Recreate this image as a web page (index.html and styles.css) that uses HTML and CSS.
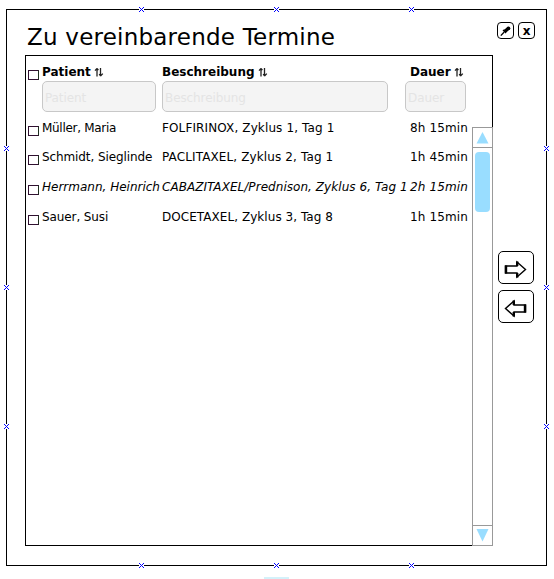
FILE: index.html
```html
<!DOCTYPE html>
<html lang="de">
<head>
<meta charset="utf-8">
<title>Zu vereinbarende Termine</title>
<link rel="stylesheet" href="styles.css">
</head>
<body>
<svg width="0" height="0" class="defs">
  <symbol id="handle" viewBox="0 0 5 5"><rect width="5" height="5" fill="#fff"/><path fill="#00f" d="M0 0h1v1H0zM4 0h1v1H4zM1 1h1v1H1zM3 1h1v1H3zM2 2h1v1H2zM1 3h1v1H1zM3 3h1v1H3zM0 4h1v1H0zM4 4h1v1H4z"/></symbol>
  <symbol id="sort" viewBox="0 0 10 10"><path fill="none" stroke="#222" stroke-width="1.3" d="M3 9.5V1.5M1 3.6L3 1.4M6.5 1v8M6.5 9l2.3-2.4M3 1.4l1.4 1.8M6.5 9L5.2 7"/></symbol>
</svg>
<main class="window">
  <section class="content">
    <h1>Zu vereinbarende Termine</h1>
    <div class="panel">
      <div class="table">
        <div class="row head"><i class="check"></i><b>Patient <svg class="sort"><use href="#sort"/></svg></b><b>Beschreibung <svg class="sort"><use href="#sort"/></svg></b><b>Dauer <svg class="sort"><use href="#sort"/></svg></b></div>
        <div class="filters"><input class="f-name" placeholder="Patient"><input class="f-desc" placeholder="Beschreibung"><input class="f-time" placeholder="Dauer"></div>
        <div class="row first"><i class="check"></i><span class="tight">Müller, Maria</span><span class="wide">FOLFIRINOX, Zyklus 1, Tag 1</span><span class="wide">8h 15min</span></div>
        <div class="row"><i class="check"></i><span class="snug">Schmidt, Sieglinde</span><span class="wide">PACLITAXEL, Zyklus 2, Tag 1</span><span class="wide">1h 45min</span></div>
        <div class="row italic"><i class="check"></i><span>Herrmann, Heinrich</span><span class="loose">CABAZITAXEL/Prednison, Zyklus 6, Tag 1</span><span class="wide">2h 15min</span></div>
        <div class="row"><i class="check"></i><span class="snug">Sauer, Susi</span><span class="loose">DOCETAXEL, Zyklus 3, Tag 8</span><span class="wide">1h 15min</span></div>
      </div>
      <div class="scroll">
        <div class="cap up"><svg width="19" height="19"><path d="M9.5 4L15.5 15.5h-12z"/></svg></div>
        <div class="track"><div class="thumb"></div></div>
        <div class="cap down"><svg width="19" height="19"><path d="M3.5 3h12l-6 12.5z"/></svg></div>
      </div>
    </div>
  </section>
  <aside class="side">
    <div class="tools">
      <button class="small"><svg width="15" height="15"><path d="M2.8 12.6L6 9.2M5 7l3 3M6 7.5L10 4.6l1.2 1.3L8 9z" fill="#000" stroke="#000" stroke-width="1.3"/><circle cx="10.4" cy="5.3" r="1.9"/></svg></button>
      <button class="small close">x</button>
    </div>
    <button class="move"><svg width="34" height="31"><path d="M6.5 14H18V10l8.5 7.5L18 25v-4H6.5z"/><path class="edge" d="M7 13.5v8M18.2 9.5V14M18.2 21v4.5"/></svg></button>
    <button class="move"><svg width="34" height="31"><path d="M26.5 14H15V10l-8.5 7.5L15 25v-4h11.5z"/><path class="edge" d="M26 13.5v8M14.8 9.5V14M14.8 21v4.5"/></svg></button>
  </aside>
  <svg class="h l t1"><use href="#handle"/></svg><svg class="h c t1"><use href="#handle"/></svg><svg class="h r t1"><use href="#handle"/></svg>
  <svg class="h x0 y1"><use href="#handle"/></svg><svg class="h x0 y2"><use href="#handle"/></svg><svg class="h x0 y3"><use href="#handle"/></svg>
  <svg class="h x1 y1"><use href="#handle"/></svg><svg class="h x1 y2"><use href="#handle"/></svg><svg class="h x1 y3"><use href="#handle"/></svg>
  <svg class="h l b1"><use href="#handle"/></svg><svg class="h c b1"><use href="#handle"/></svg><svg class="h r b1"><use href="#handle"/></svg>
</main>
<div class="stub"></div>
</body>
</html>
```
FILE: styles.css
```css
* { box-sizing: border-box; }
body { margin: 0; padding: 9px 0 0 6px; height: 579px; overflow: hidden; background: #fff; font: 12px/14px "DejaVu Sans", sans-serif; color: #000; }
.defs { position: absolute; }
.window { position: relative; width: 541px; height: 557px; border: 1px solid #000; display: flex; padding: 0 0 0 18px; }
h1 { margin: 0; padding: 12px 0 0 2px; height: 45px; font-size: 23px; line-height: 30px; font-weight: normal; letter-spacing: .22px; white-space: nowrap; }
.content { width: 468px; }
.panel { display: flex; width: 468px; height: 491px; border: 1px solid #000; }
.table { width: 446px; padding: 9px 0 0 2px; }
.row { display: grid; grid-template-columns: 14px 120px 248px 62px; height: 30px; white-space: nowrap; }
.head { height: 16px; }
.first { height: 29px; }
.italic { font-style: italic; }
.tight { letter-spacing: -.3px; }
.snug { letter-spacing: -.1px; }
.loose { letter-spacing: .05px; }
.wide { letter-spacing: .12px; }
.check { width: 11px; height: 10px; margin-top: 5px; border: 1px solid #301030; border-right-color: #203020; }
.sort { width: 10px; height: 10px; margin-left: -1px; vertical-align: -1px; }
.filters { display: flex; height: 31px; margin: 0 0 9px 14px; }
input { height: 31px; padding: 2px 0 0 2px; border: 1px solid #c8c8c8; border-radius: 5px; background: #f4f4f4; font: inherit; letter-spacing: -.1px; }
input::placeholder { color: #e4e4e4; opacity: 1; }
.f-name { width: 114px; margin-right: 6px; }
.f-desc { width: 226px; margin-right: 17px; }
.f-time { width: 61px; }
.scroll { flex: none; width: 21px; height: 419px; margin: 71px -1px 0 0; border: 1px solid #999; display: flex; flex-direction: column; background: #fff; }
.cap { height: 20px; }
.cap svg { display: block; fill: #9df; }
.up { border-bottom: 1px solid #999; }
.down { border-top: 1px solid #999; }
.track { flex: 1; padding: 4px 2px; }
.thumb { width: 15px; height: 60px; border-radius: 4px; background: #9df; }
.side { width: 42px; padding: 12px 0 0 4px; }
.tools { display: flex; gap: 4px; height: 229px; }
button { padding: 0; border: 1px solid #000; background: #fff; color: #000; display: block; }
.small { width: 17px; height: 17px; border-radius: 4px; font: bold 12px/15px "DejaVu Sans", sans-serif; }
.close { padding-top: 1px; }
.small svg, .move svg { display: block; }
.move { width: 36px; height: 33px; margin: 0 0 6px 1px; border-radius: 5px; }
.move path { fill: #fff; stroke: #000; stroke-width: 1.4; }
.move .edge { fill: none; stroke-width: 2.4; }
.h { position: absolute; width: 5px; height: 5px; shape-rendering: crispEdges; }
.l { left: 132px; } .c { left: 267px; } .r { left: 402px; }
.t1 { top: -3px; } .b1 { top: 553px; }
.x0 { left: -3px; } .x1 { left: 537px; }
.y1 { top: 136px; } .y2 { top: 275px; } .y3 { top: 414px; }
.stub { width: 25px; height: 2px; margin: 11px 0 0 258px; background: #d4f1fa; }
```
